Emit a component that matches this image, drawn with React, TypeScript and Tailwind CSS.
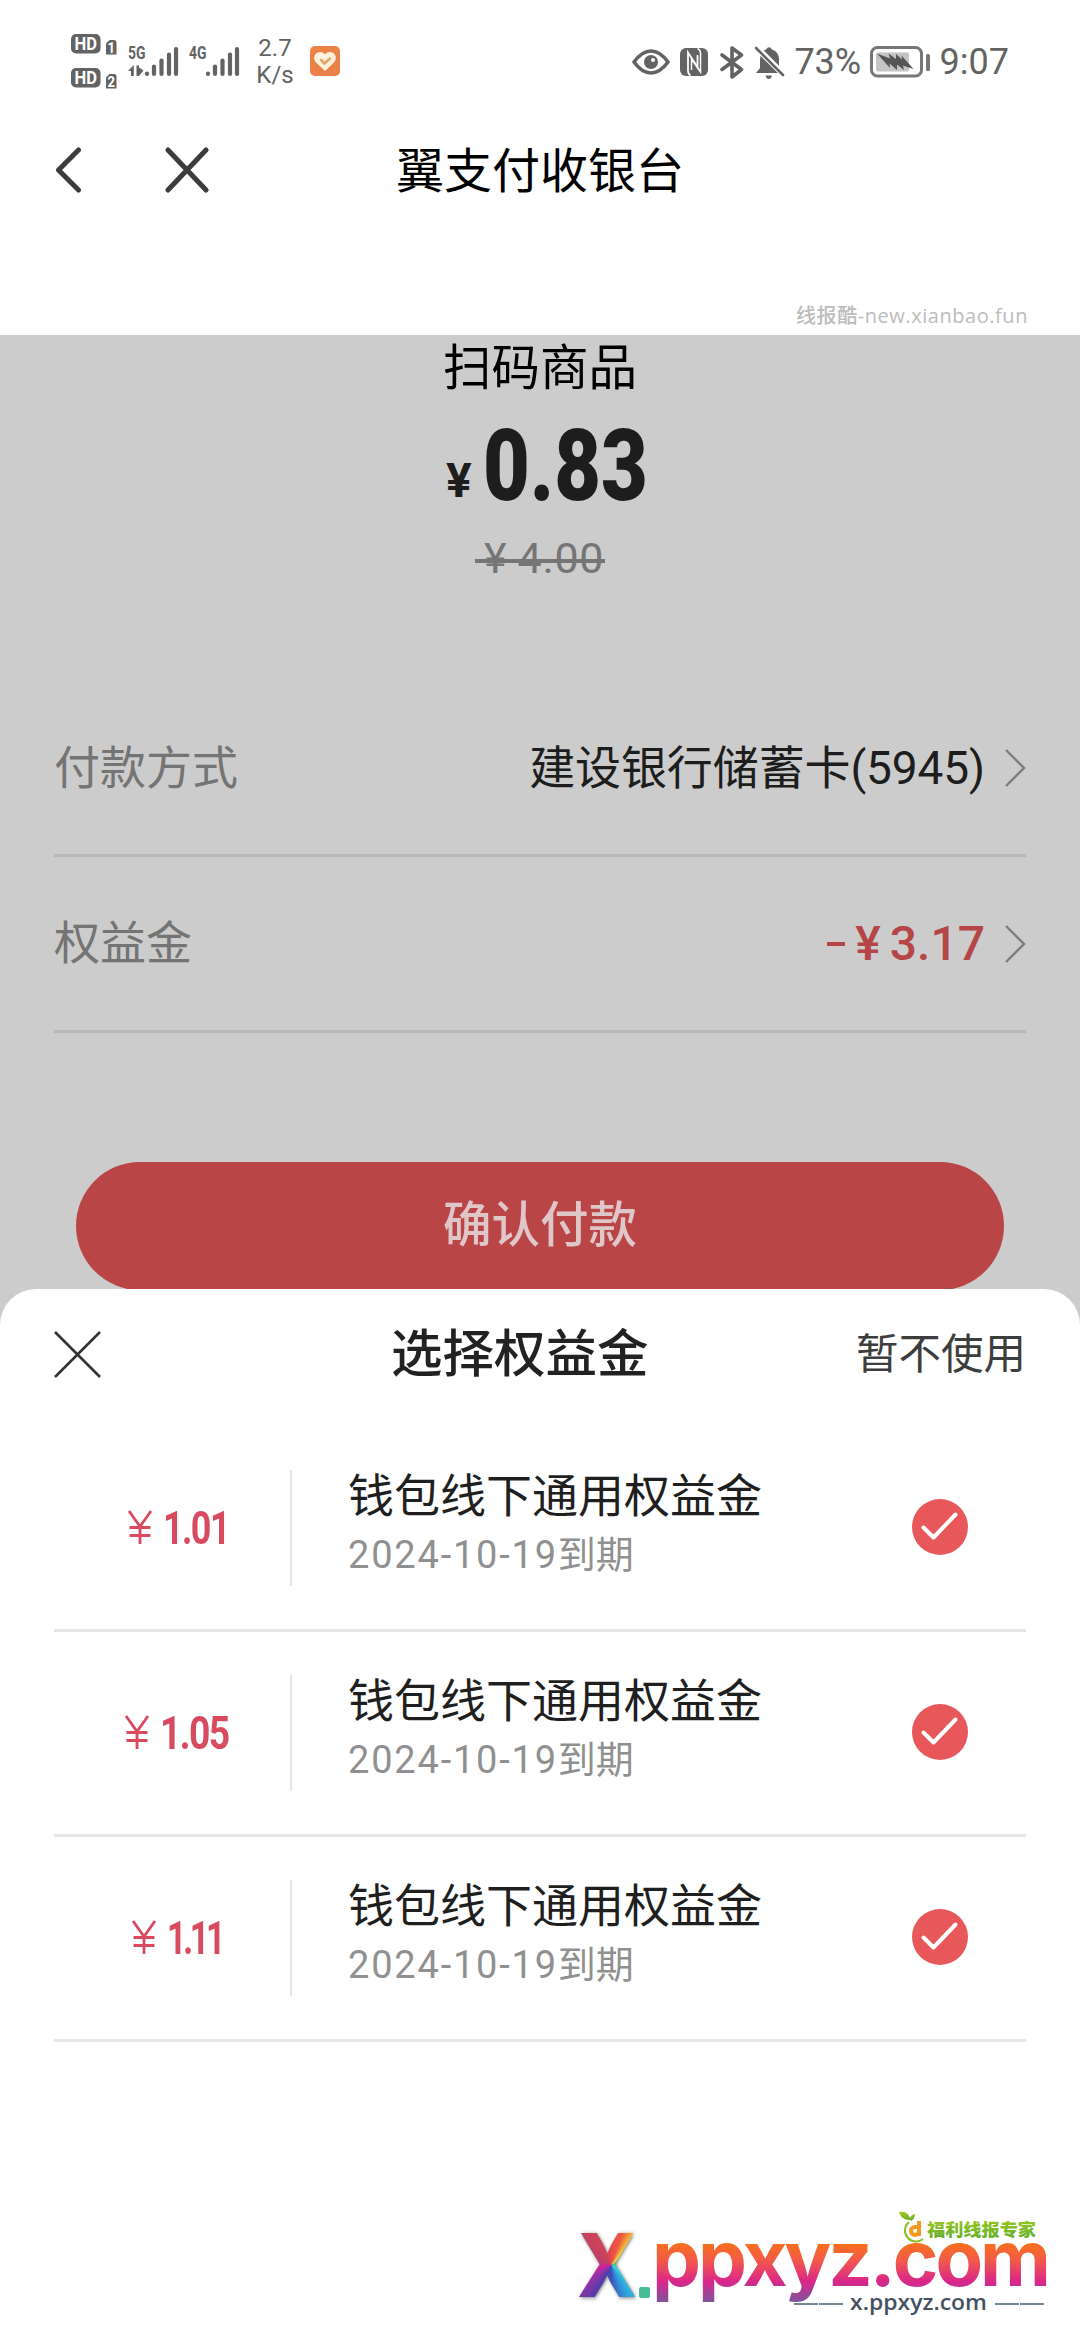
import clsx from 'clsx';

interface Coupon {
    id: number;
    amount: string;
    amountStyle: string;
    name: string;
    expire: string;
}

const COUPONS: Coupon[] = [
    { id: 1, amount: '1.01', amountStyle: 'w-[60px] scale-x-[0.78] tracking-[-2px]', name: '钱包线下通用权益金', expire: '2024-10-19' },
    { id: 2, amount: '1.05', amountStyle: 'w-[66px] scale-x-[0.81] tracking-[-2px]', name: '钱包线下通用权益金', expire: '2024-10-19' },
    { id: 3, amount: '1.11', amountStyle: 'w-[53px] scale-x-[0.74] tracking-[-4.5px]', name: '钱包线下通用权益金', expire: '2024-10-19' },
];

const HdBadge = ({ sim }: { sim: string }) => (
    <svg width="46" height="21" viewBox="0 0 46 21" className="overflow-visible font-['Roboto',sans-serif]">
        <rect x="0" y="0" width="29.5" height="19.5" rx="5" fill="#636363" />
        <text x="3.5" y="16" fontSize="18" fontWeight="700" fill="#fff" textLength="22.5" lengthAdjust="spacingAndGlyphs">
            HD
        </text>
        <path d="M35 9.500 L38.500 6 H43 Q45.500 6 45.500 8.500 V20.500 H35 Z" fill="#636363" />
        <text x="36.500" y="18.500" fontSize="14.500" fontWeight="700" fill="#fff" textLength="7.500" lengthAdjust="spacingAndGlyphs">
            {sim}
        </text>
    </svg>
);

const Signal = ({ label, data }: { label: string; data?: boolean }) => (
    <svg width="51" height="40" viewBox="0 -8 51 40" className="-mt-[8px] overflow-visible font-['Roboto',sans-serif]">
        <text x="0" y="13.300" fontSize="19" fontWeight="700" fill="#636363" textLength="17.500" lengthAdjust="spacingAndGlyphs">
            {label}
        </text>
        {data && <path d="M0 25 L5.800 19 V30 H3 V25 Z M8.500 19.500 H11 V21.500 L15.500 24.500 L11 30 H8.500 Z" fill="#636363" />}
        <g stroke="#636363" strokeWidth="4.200" strokeLinecap="round">
            <path d="M19 27.500 V28" />
            <path d="M26 20.500 V28" />
            <path d="M33.500 14.500 V28" />
            <path d="M41 8.500 V28" />
            <path d="M48 3 V28" />
        </g>
    </svg>
);

const StatusBar = () => (
    <div className="flex h-[122px] items-start pt-[34px] pr-[71px] pl-[71px] text-[#636363]">
        <div className="flex flex-col gap-[13px]">
            <HdBadge sim="1" />
            <HdBadge sim="2" />
        </div>
        <div className="mt-[12px] ml-[11px] flex gap-[10px]">
            <Signal label="5G" data />
            <Signal label="4G" />
        </div>
        <div className="mt-px ml-[17px] flex w-[36px] flex-col items-center text-[24px] leading-[27px]">
            <span>2.7</span>
            <span>K/s</span>
        </div>
        <svg width="30" height="30" viewBox="0 0 30 30" className="mt-[12px] ml-[17px]">
            <rect width="30" height="30" rx="5" fill="#ea8247" />
            <path d="M15 25 L6 16.500 C2 12 5 6 10 6 C12.500 6 14 7 15 8.500 C16 7 17.500 6 20 6 C25 6 28 12 24 16.500 Z" fill="#fdf2dc" />
            <path d="M11 14 L14.500 17.500 L20 12.500" fill="none" stroke="#e8a464" strokeWidth="2.500" strokeLinecap="round" />
        </svg>

        <div className="mt-[11px] ml-auto flex items-center">
            <svg width="38" height="26" viewBox="0 0 38 26">
                <path d="M2 13 Q10 2 19 2 Q28 2 36 13 Q28 24 19 24 Q10 24 2 13 Z" fill="none" stroke="#636363" strokeWidth="3.600" strokeLinejoin="round" />
                <circle cx="19" cy="13" r="7" fill="#636363" />
                <circle cx="21" cy="11" r="2" fill="#fff" />
            </svg>
            <svg width="28" height="28" viewBox="0 0 28 28" className="ml-[10px]">
                <rect width="28" height="28" rx="6" fill="#636363" />
                <path d="M10.500 27.500 Q8 26 8 23 V4.500 L17.500 19 V7" fill="none" stroke="#fff" strokeWidth="1.800" />
                <path d="M17.500 0.500 Q20.500 2 20.500 5 V24 L11.500 11 V22" fill="none" stroke="#fff" strokeWidth="1.500" />
            </svg>
            <svg width="24" height="33" viewBox="0 0 24 33" className="ml-[12px]">
                <path d="M2 9 L21.500 23.500 L12 31 V2 L21.500 9 L2 23.500" fill="none" stroke="#636363" strokeWidth="3.600" strokeLinejoin="round" strokeLinecap="round" />
            </svg>
            <svg width="30" height="33" viewBox="0 0 30 33" className="ml-[11px]">
                <path d="M1 27 L5 22 V15 Q5 5 11 3.500 Q14 -1 17 3.500 Q23.500 5.500 24 13 V22 L28 27 Z" fill="#636363" />
                <path d="M10.500 29.500 H17 Q16 33 13.700 33 Q11.500 33 10.500 29.500 Z" fill="#636363" />
                <path d="M0 0 L30 30" stroke="#fff" strokeWidth="6" />
                <path d="M1 2 L28 29" stroke="#636363" strokeWidth="2.600" strokeLinecap="round" />
            </svg>
            <span className="ml-[10px] w-[69px] text-[36px] leading-[34px] tracking-[-0.2px]">73%</span>
            <svg width="61" height="32" viewBox="0 0 61 32" className="ml-[6px]">
                <rect x="1.500" y="1.500" width="50" height="28.500" rx="6" fill="none" stroke="#777" strokeWidth="3" />
                <rect x="6" y="6.500" width="33" height="19" rx="2" fill="#c4c4c4" />
                <path d="M7 7.500 L20 12.500 L18.500 7.500 L26 13 L26 8 L32 13.500 L31.500 9.500 L43.500 23 L33 19.500 L34 24 L27 18.500 L27 24 L19.500 17.500 L20 22 Z" fill="#555" />
                <rect x="56" y="8" width="4" height="17" rx="1.500" fill="#777" />
            </svg>
            <span className="ml-[9px] text-[36px] leading-[34px]">9:07</span>
        </div>
    </div>
);

const Chevron = () => (
    <svg width="22" height="38" viewBox="0 0 22 38" className="ml-[19px]">
        <path d="M2 1 L20 19 L2 37" fill="none" stroke="#7d7d7d" strokeWidth="2.400" />
    </svg>
);

const CheckMark = () => (
    <svg width="56" height="56" viewBox="0 0 56 56">
        <circle cx="28" cy="28" r="28" fill="#e8575a" />
        <path d="M11.500 28.500 L21.500 38.500 L43.500 15.500" fill="none" stroke="#fff" strokeWidth="4" strokeLinecap="round" strokeLinejoin="round" />
    </svg>
);

const CouponRow = ({ coupon }: { coupon: Coupon }) => (
    <li className="flex h-[205px] items-start border-b-[3px] border-[#e6e6e6] pt-[43px]">
        <div className="flex h-[116px] w-[238px] items-center justify-center border-r-2 border-[#e6e6e6] pl-[6px] text-[#d84a5e]">
            <svg width="26" height="34" viewBox="0 0 26 34" className="mr-[10px] mb-[3px]">
                <path d="M2 1 L13 16.500 L24 1 M13 16.500 V34 M2.500 17.500 H23.500 M2.500 25.500 H23.500" fill="none" stroke="currentColor" strokeWidth="2.800" />
            </svg>
            <span className={clsx('inline-block origin-left text-[46px] leading-none font-bold', coupon.amountStyle)}>{coupon.amount}</span>
        </div>
        <div className="-mt-px ml-[56px] flex flex-1 flex-col">
            <span className="text-[46px] leading-[54px] text-[#1f1f1f]">{coupon.name}</span>
            <span className="mt-[6px] text-[38px] leading-[52px] text-[#909090]">
                <span className="tracking-[1.8px]">{coupon.expire}</span>到期
            </span>
        </div>
        <div className="mt-[29px] mr-[58px]">
            <CheckMark />
        </div>
    </li>
);

// Site mark floating over the bottom-right corner
const SiteMark = () => (
    <div className="absolute top-[2200px] left-[570px] h-[130px] w-[490px]">
        <span className="absolute top-[10px] left-[7px] inline-block origin-left scale-x-[0.9] bg-[conic-gradient(from_0deg_at_57%_50%,#e8484a_0deg,#ec5a42_22deg,#f5a035_34deg,#f5d040_42deg,#4cbf70_70deg,#3ad0d8_125deg,#2f9fdc_150deg,#3a4fb8_180deg,#5a3aa8_215deg,#8a35a8_232deg,#d020a0_258deg,#b8406a_290deg,#d04455_335deg,#e8484a_360deg)] bg-clip-text font-['Inter',sans-serif] text-[88px] leading-[110px] font-extrabold text-transparent drop-shadow-[1px_1px_2px_rgba(0,0,0,0.5)]">
            X
        </span>
        <svg width="490" height="130" viewBox="0 0 490 130" className="absolute inset-0">
            <defs>
                <linearGradient id="word" gradientUnits="userSpaceOnUse" x1="0" y1="43" x2="0" y2="100">
                    <stop offset="0" stopColor="#f8701c" />
                    <stop offset="0.3" stopColor="#f25a48" />
                    <stop offset="0.68" stopColor="#da268c" />
                    <stop offset="1" stopColor="#86509a" />
                </linearGradient>
                <linearGradient id="leaf" x1="0" y1="0" x2="0" y2="1">
                    <stop offset="0" stopColor="#a6cc1c" />
                    <stop offset="1" stopColor="#5cab2e" />
                </linearGradient>
            </defs>
            <rect x="69" y="87" width="11" height="11" rx="2" fill="#45bd96" />
            <text x="82" y="86" fontSize="77" fontWeight="700" fill="url(#word)" letterSpacing="-3" textLength="396" lengthAdjust="spacingAndGlyphs" className="font-['Inter',sans-serif]">
                ppxyz.com
            </text>
            <path d="M329 12 Q338 10 341 20 Q332 21 329 12 Z M340 19 Q340 15 345 14 Q345 19 341 21 Z" fill="url(#leaf)" />
            <path d="M339 22 A10.500 10.500 0 1 0 353 39" fill="none" stroke="#8cc025" strokeWidth="2" />
            <path d="M349 21 V36 M349 31 A4 4 0 1 1 345 27 H349" fill="none" stroke="#f39a1d" strokeWidth="4" />
            <text x="357" y="35.500" fontSize="17.500" fontWeight="900" fill="url(#leaf)" textLength="109" lengthAdjust="spacingAndGlyphs" className="font-['Noto_Sans_CJK_SC',sans-serif]">
                福利线报专家
            </text>
            <path d="M224 104 H273 M425 104 H475" stroke="#46606f" strokeWidth="1.500" strokeDasharray="24 1" />
            <text x="280" y="109.500" fontSize="22" fontWeight="600" fill="#44525f" textLength="137" lengthAdjust="spacingAndGlyphs" className="font-['Open_Sans',sans-serif]">
                x.ppxyz.com
            </text>
        </svg>
    </div>
);

export default function App() {
    return (
        <div className="relative flex h-[2340px] w-[1080px] flex-col overflow-hidden bg-white font-['Roboto','Noto_Sans_CJK_SC',sans-serif]">
            <StatusBar />
            <header className="flex h-[96px] items-center px-[54px]">
                <div className="flex w-[300px] items-center">
                    <svg width="28" height="46" viewBox="0 0 28 46">
                        <path d="M24.500 3 L4.500 23 L24.500 43" fill="none" stroke="#3c3c3c" strokeWidth="5" strokeLinecap="round" strokeLinejoin="round" />
                    </svg>
                    <svg width="46" height="46" viewBox="0 0 46 46" className="ml-[82px]">
                        <path d="M4 3 L42 43 M42 3 L4 43" fill="none" stroke="#3c3c3c" strokeWidth="5" strokeLinecap="round" />
                    </svg>
                </div>
                <h1 className="flex-1 pt-[4px] text-center text-[48px] leading-none text-black">翼支付收银台</h1>
                <div className="w-[300px]" />
            </header>
            <div className="flex h-[117px] items-end justify-end pr-[52px] pb-[5px]">
                <span className="font-['Open_Sans','Noto_Sans_CJK_SC',sans-serif] text-[20px] leading-[28px] font-medium tracking-[0.55px] text-[#bcbcbc]">线报酷-new.xianbao.fun</span>
            </div>

            <main className="flex h-[1005px] shrink-0 flex-col bg-[#ccc]">
                <div className="flex flex-col items-center">
                    <h2 className="mt-[6px] text-[48.500px] leading-[56px] text-black">扫码商品</h2>
                    <div className="mt-[19px] flex h-[100px] w-[194px] items-end text-[#1d1d1d]">
                        <span className="mb-[11px] ml-[3px] text-[48px] leading-none font-bold">¥</span>
                        <span className="ml-[11px] w-[156px] origin-left scale-x-[0.8] text-[101px] leading-[100px] font-black">0.83</span>
                    </div>
                    <div className="mt-[12px] flex h-[60px] w-[130px] items-center">
                        <span className="relative flex w-full pl-[9px] text-[43px] leading-[60px] text-[#757575]">
                            <span>¥</span>
                            <span className="ml-[11px] tracking-[0.7px]">4.00</span>
                            <span className="absolute top-[31px] left-0 h-[4px] w-full bg-[#757575]" />
                        </span>
                    </div>
                </div>
                <div className="mt-[94px] flex flex-col px-[54px]">
                    <div className="flex h-[175px] items-center border-b-[3px] border-[#b8b8b8]">
                        <span className="flex-1 text-[46px] text-[#747474]">付款方式</span>
                        <span className="text-[46px] tracking-[-0.1px] text-[#1d1d1d]">建设银行储蓄卡(5945)</span>
                        <Chevron />
                    </div>
                    <div className="flex h-[176px] items-center border-b-[3px] border-[#b8b8b8]">
                        <span className="flex-1 text-[46px] text-[#747474]">权益金</span>
                        <span className="flex items-center text-[48px] font-medium text-[#b54547]">
                            <span className="mr-[10px] h-[4px] w-[18px] bg-[#b54547]" />
                            <span>¥</span>
                            <span className="ml-[9px]">3.17</span>
                        </span>
                        <Chevron />
                    </div>
                </div>
                <button className="mx-[76px] mt-[129px] h-[128px] rounded-full bg-[#ba4546] text-[48.500px] font-medium text-[#dfc6c8]">确认付款</button>
            </main>

            <section className="-mt-[51px] flex flex-1 flex-col rounded-t-[36px] bg-white px-[54px]">
                <div className="flex h-[138px] items-center pb-[6px]">
                    <svg width="48" height="48" viewBox="0 0 48 48">
                        <path d="M1 1 L46 46 M46 1 L1 46" fill="none" stroke="#333" strokeWidth="2.600" />
                    </svg>
                    <h3 className="ml-[289px] flex-1 text-[51.500px] leading-none font-medium text-[#222]">选择权益金</h3>
                    <span className="text-[42.500px] leading-none text-[#3d3d3d]">暂不使用</span>
                </div>
                <ul>
                    {COUPONS.map((coupon) => (
                        <CouponRow key={coupon.id} coupon={coupon} />
                    ))}
                </ul>
            </section>
            <SiteMark />
        </div>
    );
}
